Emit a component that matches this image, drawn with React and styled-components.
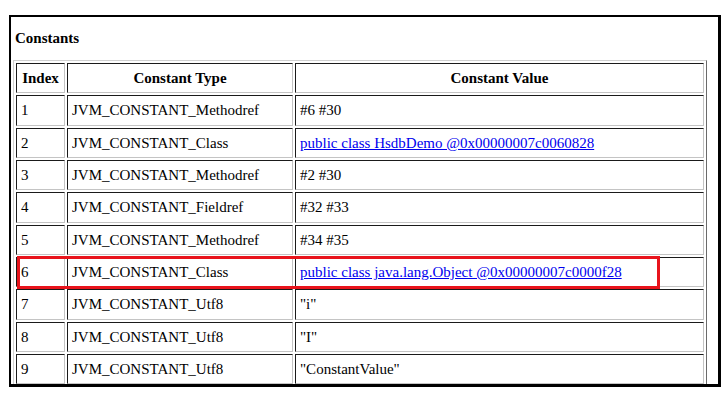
import * as React from 'react';
import styled, { createGlobalStyle } from 'styled-components';

const GlobalStyle = createGlobalStyle`
  html, body {
    margin: 0;
    padding: 0;
    background: #ffffff;
  }

  body {
    font-family: 'Liberation Serif', 'Times New Roman', serif;
    font-size: 15px;
    color: #000000;
  }
`;

const Frame = styled.div`
  position: relative;
  box-sizing: border-box;
  margin: 15px 0 0 9px;
  width: 712px;
  height: 372px;
  border-style: solid;
  border-color: #000000;
  border-width: 2px 3px 3px 2px;
  padding: 0 3px 0 2px;
  overflow: hidden;
  background: #ffffff;
`;

const Heading = styled.h3`
  margin: 13px 0 13px 2px;
  font-size: 15px;
  line-height: 17px;
  font-weight: bold;
`;

const Table = styled.table`
  width: 694px;
  table-layout: fixed;
  border-collapse: separate;
  border-spacing: 2px;
  border-style: solid;
  border-width: 1px;
  border-color: #d0d0d0 #6a6a6a #6a6a6a #d0d0d0;

  & th,
  & td {
    box-sizing: border-box;
    border-style: solid;
    border-width: 1px;
    border-color: #1a1a1a #c4c4c4 #c4c4c4 #1a1a1a;
    padding: 0 4px;
    line-height: 28.35px;
    white-space: nowrap;
  }

  & th {
    font-weight: bold;
    text-align: center;
  }

  & td {
    text-align: left;
  }
`;

const IndexHead = styled.th`
  width: 49px;
`;

const TypeHead = styled.th`
  width: 226px;
`;

const Link = styled.a`
  color: #0000ee;
  text-decoration: underline;
`;

const Highlight = styled.div`
  position: absolute;
  left: 6px;
  top: 239px;
  width: 643px;
  height: 33px;
  box-sizing: border-box;
  border: 3px solid #e8141c;
  pointer-events: none;
`;

const rows = [
  { type: 'JVM_CONSTANT_Methodref', value: '#6 #30' },
  { type: 'JVM_CONSTANT_Class', value: 'public class HsdbDemo @0x00000007c0060828', link: true },
  { type: 'JVM_CONSTANT_Methodref', value: '#2 #30' },
  { type: 'JVM_CONSTANT_Fieldref', value: '#32 #33' },
  { type: 'JVM_CONSTANT_Methodref', value: '#34 #35' },
  { type: 'JVM_CONSTANT_Class', value: 'public class java.lang.Object @0x00000007c0000f28', link: true },
  { type: 'JVM_CONSTANT_Utf8', value: '"i"' },
  { type: 'JVM_CONSTANT_Utf8', value: '"I"' },
  { type: 'JVM_CONSTANT_Utf8', value: '"ConstantValue"' },
];

const App = () => (
  <>
    <GlobalStyle />
    <Frame>
      <Heading>Constants</Heading>
      <Table>
        <thead>
          <tr>
            <IndexHead>Index</IndexHead>
            <TypeHead>Constant Type</TypeHead>
            <th>Constant Value</th>
          </tr>
        </thead>
        <tbody>
          {rows.map((row, i) => (
            <tr key={i}>
              <td>{i + 1}</td>
              <td>{row.type}</td>
              <td>{row.link ? <Link href="#">{row.value}</Link> : row.value}</td>
            </tr>
          ))}
        </tbody>
      </Table>
      <Highlight />
    </Frame>
  </>
);

export default App;
